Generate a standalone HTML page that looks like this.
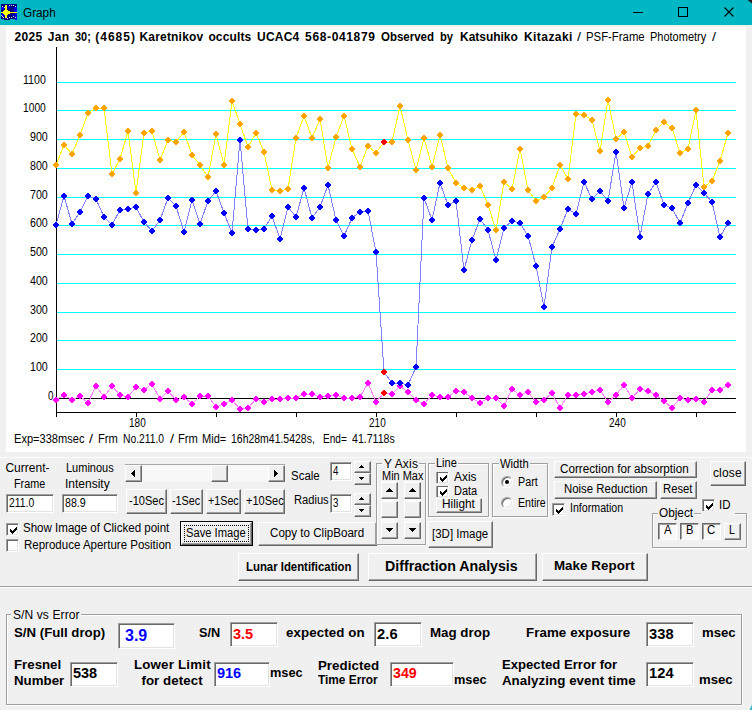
<!DOCTYPE html><html><head><meta charset="utf-8"><title>Graph</title><style>
html,body{margin:0;padding:0}
body{width:752px;height:710px;background:#f0f0f0;overflow:hidden;position:relative;font-family:"Liberation Sans",sans-serif;font-size:12px;color:#000}
.abs{position:absolute}
.btn{position:absolute;box-sizing:border-box;background:#f0f0f0;border:1px solid;border-color:#fff #696969 #696969 #fff;box-shadow:inset -1px -1px 0 #a0a0a0,inset 1px 1px 0 #f0f0f0}
.pbtn{position:absolute;box-sizing:border-box;background:#f8f8f8;border:1px solid;border-color:#696969 #fff #fff #696969;box-shadow:inset 1px 1px 0 #a0a0a0}
.tb{position:absolute;box-sizing:border-box;background:#fff;border:1px solid;border-color:#a0a0a0 #fff #fff #a0a0a0;box-shadow:inset 1px 1px 0 #696969,inset -1px -1px 0 #e3e3e3}
.grp{position:absolute;box-sizing:border-box;border:1px solid #a0a0a0;box-shadow:1px 1px 0 #fff,inset 1px 1px 0 #fff}
.gap{position:absolute;background:#f0f0f0}
.cb{position:absolute;box-sizing:border-box;width:13px;height:13px;background:#fff;border:1px solid;border-color:#a0a0a0 #fff #fff #a0a0a0;box-shadow:inset 1px 1px 0 #696969,inset -1px -1px 0 #e3e3e3}
.rb{position:absolute;box-sizing:border-box;width:12px;height:12px;border-radius:6px;background:#fff;border:1px solid;border-color:#a0a0a0 #fff #fff #a0a0a0;box-shadow:inset 1px 1px 0 #696969,inset -1px -1px 0 #e3e3e3}
.sbtrack{position:absolute;background:#f8f8f8}
.t{position:absolute;white-space:pre;line-height:1;transform-origin:0 0;display:block}
</style></head><body>
<svg class="abs" style="left:0;top:0" width="752" height="460" viewBox="0 0 752 460" shape-rendering="crispEdges"><rect x="6" y="27" width="740" height="425" fill="#fff"/><rect x="57" y="82" width="679" height="1" fill="#00ffff"/><rect x="57" y="110" width="679" height="1" fill="#00ffff"/><rect x="57" y="139" width="679" height="1" fill="#00ffff"/><rect x="57" y="168" width="679" height="1" fill="#00ffff"/><rect x="57" y="197" width="679" height="1" fill="#00ffff"/><rect x="57" y="225" width="679" height="1" fill="#00ffff"/><rect x="57" y="254" width="679" height="1" fill="#00ffff"/><rect x="57" y="283" width="679" height="1" fill="#00ffff"/><rect x="57" y="312" width="679" height="1" fill="#00ffff"/><rect x="57" y="340" width="679" height="1" fill="#00ffff"/><rect x="57" y="369" width="679" height="1" fill="#00ffff"/><rect x="56" y="47" width="1" height="370" fill="#000"/><rect x="56" y="398" width="680" height="1" fill="#000"/><rect x="56" y="412" width="680" height="1" fill="#000"/><rect x="136" y="412" width="1" height="5" fill="#000"/><rect x="216" y="412" width="1" height="5" fill="#000"/><rect x="296" y="412" width="1" height="5" fill="#000"/><rect x="376" y="412" width="1" height="5" fill="#000"/><rect x="456" y="412" width="1" height="5" fill="#000"/><rect x="536" y="412" width="1" height="5" fill="#000"/><rect x="616" y="412" width="1" height="5" fill="#000"/><rect x="696" y="412" width="1" height="5" fill="#000"/><g shape-rendering="crispEdges"><polyline points="56,400 64,395 72,400 80,396 88,403 96,386 104,397 112,386 120,395 128,397 136,387 144,390 152,384 160,399 168,391 176,400 184,397 192,404 200,396 208,396 216,407 224,404 232,400 240,409 248,408 256,399 264,402 272,399 280,399 288,398 296,398 304,394 312,394 320,397 328,396 336,395 344,398 352,398 360,397 368,383 376,402 384,393 392,394 400,386 408,392 416,400 424,404 432,395 440,397 448,397 456,391 464,392 472,398 480,403 488,398 496,398 504,406 512,389 520,395 528,392 536,402 544,400 552,393 560,408 568,395 576,395 584,394 592,392 600,390 608,402 616,395 624,385 632,398 640,389 648,391 656,395 664,401 672,408 680,398 688,400 696,399 704,402 712,390 720,390 728,385" fill="none" stroke="#ff80ff" stroke-width="1"/><polyline points="56,165 64,145 72,154 80,135 88,113 96,108 104,108 112,174 120,159 128,131 136,193 144,133 152,131 160,160 168,140 176,142 184,132 192,155 200,165 208,177 216,134 224,165 232,101 240,124 248,147 256,133 264,152 272,190 280,191 288,189 296,138 304,116 312,138 320,119 328,168 336,137 344,116 352,149 360,167 368,146 376,153 384,142 392,142 400,106 408,140 416,170 424,138 432,167 440,135 448,168 456,183 464,188 472,190 480,186 488,205 496,230 504,182 512,189 520,149 528,190 536,201 544,197 552,188 560,165 568,179 576,114 584,115 592,120 600,151 608,100 616,139 624,132 632,157 640,148 648,146 656,130 664,122 672,128 680,153 688,149 696,110 704,187 712,181 720,161 728,133" fill="none" stroke="#ffff00" stroke-width="1"/><polyline points="56,225 64,196 72,224 80,212 88,196 96,199 104,217 112,225 120,210 128,209 136,207 144,222 152,231 160,220 168,198 176,206 184,232 192,200 200,224 208,201 216,191 224,213 232,233 240,140 248,229 256,230 264,229 272,216 280,239 288,207 296,217 304,188 312,218 320,207 328,185 336,220 344,236 352,218 360,212 368,211 376,252 384,372 392,383 400,383 408,385 416,367 424,198 432,220 440,183 448,205 456,201 464,270 472,240 480,219 488,230 496,260 504,228 512,221 520,223 528,236 536,266 544,307 552,247 560,229 568,209 576,214 584,182 592,199 600,191 608,201 616,152 624,208 632,182 640,237 648,194 656,182 664,205 672,208 680,223 688,203 696,185 704,193 712,202 720,237 728,223" fill="none" stroke="#8080ff" stroke-width="1"/><path d="M55 397h2v1h1v1h1v2h-1v1h-1v1h-2v-1h-1v-1h-1v-2h1v-1h1z" fill="#ff00ff"/><path d="M63 392h2v1h1v1h1v2h-1v1h-1v1h-2v-1h-1v-1h-1v-2h1v-1h1z" fill="#ff00ff"/><path d="M71 397h2v1h1v1h1v2h-1v1h-1v1h-2v-1h-1v-1h-1v-2h1v-1h1z" fill="#ff00ff"/><path d="M79 393h2v1h1v1h1v2h-1v1h-1v1h-2v-1h-1v-1h-1v-2h1v-1h1z" fill="#ff00ff"/><path d="M87 400h2v1h1v1h1v2h-1v1h-1v1h-2v-1h-1v-1h-1v-2h1v-1h1z" fill="#ff00ff"/><path d="M95 383h2v1h1v1h1v2h-1v1h-1v1h-2v-1h-1v-1h-1v-2h1v-1h1z" fill="#ff00ff"/><path d="M103 394h2v1h1v1h1v2h-1v1h-1v1h-2v-1h-1v-1h-1v-2h1v-1h1z" fill="#ff00ff"/><path d="M111 383h2v1h1v1h1v2h-1v1h-1v1h-2v-1h-1v-1h-1v-2h1v-1h1z" fill="#ff00ff"/><path d="M119 392h2v1h1v1h1v2h-1v1h-1v1h-2v-1h-1v-1h-1v-2h1v-1h1z" fill="#ff00ff"/><path d="M127 394h2v1h1v1h1v2h-1v1h-1v1h-2v-1h-1v-1h-1v-2h1v-1h1z" fill="#ff00ff"/><path d="M135 384h2v1h1v1h1v2h-1v1h-1v1h-2v-1h-1v-1h-1v-2h1v-1h1z" fill="#ff00ff"/><path d="M143 387h2v1h1v1h1v2h-1v1h-1v1h-2v-1h-1v-1h-1v-2h1v-1h1z" fill="#ff00ff"/><path d="M151 381h2v1h1v1h1v2h-1v1h-1v1h-2v-1h-1v-1h-1v-2h1v-1h1z" fill="#ff00ff"/><path d="M159 396h2v1h1v1h1v2h-1v1h-1v1h-2v-1h-1v-1h-1v-2h1v-1h1z" fill="#ff00ff"/><path d="M167 388h2v1h1v1h1v2h-1v1h-1v1h-2v-1h-1v-1h-1v-2h1v-1h1z" fill="#ff00ff"/><path d="M175 397h2v1h1v1h1v2h-1v1h-1v1h-2v-1h-1v-1h-1v-2h1v-1h1z" fill="#ff00ff"/><path d="M183 394h2v1h1v1h1v2h-1v1h-1v1h-2v-1h-1v-1h-1v-2h1v-1h1z" fill="#ff00ff"/><path d="M191 401h2v1h1v1h1v2h-1v1h-1v1h-2v-1h-1v-1h-1v-2h1v-1h1z" fill="#ff00ff"/><path d="M199 393h2v1h1v1h1v2h-1v1h-1v1h-2v-1h-1v-1h-1v-2h1v-1h1z" fill="#ff00ff"/><path d="M207 393h2v1h1v1h1v2h-1v1h-1v1h-2v-1h-1v-1h-1v-2h1v-1h1z" fill="#ff00ff"/><path d="M215 404h2v1h1v1h1v2h-1v1h-1v1h-2v-1h-1v-1h-1v-2h1v-1h1z" fill="#ff00ff"/><path d="M223 401h2v1h1v1h1v2h-1v1h-1v1h-2v-1h-1v-1h-1v-2h1v-1h1z" fill="#ff00ff"/><path d="M231 397h2v1h1v1h1v2h-1v1h-1v1h-2v-1h-1v-1h-1v-2h1v-1h1z" fill="#ff00ff"/><path d="M239 406h2v1h1v1h1v2h-1v1h-1v1h-2v-1h-1v-1h-1v-2h1v-1h1z" fill="#ff00ff"/><path d="M247 405h2v1h1v1h1v2h-1v1h-1v1h-2v-1h-1v-1h-1v-2h1v-1h1z" fill="#ff00ff"/><path d="M255 396h2v1h1v1h1v2h-1v1h-1v1h-2v-1h-1v-1h-1v-2h1v-1h1z" fill="#ff00ff"/><path d="M263 399h2v1h1v1h1v2h-1v1h-1v1h-2v-1h-1v-1h-1v-2h1v-1h1z" fill="#ff00ff"/><path d="M271 396h2v1h1v1h1v2h-1v1h-1v1h-2v-1h-1v-1h-1v-2h1v-1h1z" fill="#ff00ff"/><path d="M279 396h2v1h1v1h1v2h-1v1h-1v1h-2v-1h-1v-1h-1v-2h1v-1h1z" fill="#ff00ff"/><path d="M287 395h2v1h1v1h1v2h-1v1h-1v1h-2v-1h-1v-1h-1v-2h1v-1h1z" fill="#ff00ff"/><path d="M295 395h2v1h1v1h1v2h-1v1h-1v1h-2v-1h-1v-1h-1v-2h1v-1h1z" fill="#ff00ff"/><path d="M303 391h2v1h1v1h1v2h-1v1h-1v1h-2v-1h-1v-1h-1v-2h1v-1h1z" fill="#ff00ff"/><path d="M311 391h2v1h1v1h1v2h-1v1h-1v1h-2v-1h-1v-1h-1v-2h1v-1h1z" fill="#ff00ff"/><path d="M319 394h2v1h1v1h1v2h-1v1h-1v1h-2v-1h-1v-1h-1v-2h1v-1h1z" fill="#ff00ff"/><path d="M327 393h2v1h1v1h1v2h-1v1h-1v1h-2v-1h-1v-1h-1v-2h1v-1h1z" fill="#ff00ff"/><path d="M335 392h2v1h1v1h1v2h-1v1h-1v1h-2v-1h-1v-1h-1v-2h1v-1h1z" fill="#ff00ff"/><path d="M343 395h2v1h1v1h1v2h-1v1h-1v1h-2v-1h-1v-1h-1v-2h1v-1h1z" fill="#ff00ff"/><path d="M351 395h2v1h1v1h1v2h-1v1h-1v1h-2v-1h-1v-1h-1v-2h1v-1h1z" fill="#ff00ff"/><path d="M359 394h2v1h1v1h1v2h-1v1h-1v1h-2v-1h-1v-1h-1v-2h1v-1h1z" fill="#ff00ff"/><path d="M367 380h2v1h1v1h1v2h-1v1h-1v1h-2v-1h-1v-1h-1v-2h1v-1h1z" fill="#ff00ff"/><path d="M375 399h2v1h1v1h1v2h-1v1h-1v1h-2v-1h-1v-1h-1v-2h1v-1h1z" fill="#ff00ff"/><path d="M383 390h2v1h1v1h1v2h-1v1h-1v1h-2v-1h-1v-1h-1v-2h1v-1h1z" fill="#ff0000"/><path d="M391 391h2v1h1v1h1v2h-1v1h-1v1h-2v-1h-1v-1h-1v-2h1v-1h1z" fill="#ff00ff"/><path d="M399 383h2v1h1v1h1v2h-1v1h-1v1h-2v-1h-1v-1h-1v-2h1v-1h1z" fill="#ff00ff"/><path d="M407 389h2v1h1v1h1v2h-1v1h-1v1h-2v-1h-1v-1h-1v-2h1v-1h1z" fill="#ff00ff"/><path d="M415 397h2v1h1v1h1v2h-1v1h-1v1h-2v-1h-1v-1h-1v-2h1v-1h1z" fill="#ff00ff"/><path d="M423 401h2v1h1v1h1v2h-1v1h-1v1h-2v-1h-1v-1h-1v-2h1v-1h1z" fill="#ff00ff"/><path d="M431 392h2v1h1v1h1v2h-1v1h-1v1h-2v-1h-1v-1h-1v-2h1v-1h1z" fill="#ff00ff"/><path d="M439 394h2v1h1v1h1v2h-1v1h-1v1h-2v-1h-1v-1h-1v-2h1v-1h1z" fill="#ff00ff"/><path d="M447 394h2v1h1v1h1v2h-1v1h-1v1h-2v-1h-1v-1h-1v-2h1v-1h1z" fill="#ff00ff"/><path d="M455 388h2v1h1v1h1v2h-1v1h-1v1h-2v-1h-1v-1h-1v-2h1v-1h1z" fill="#ff00ff"/><path d="M463 389h2v1h1v1h1v2h-1v1h-1v1h-2v-1h-1v-1h-1v-2h1v-1h1z" fill="#ff00ff"/><path d="M471 395h2v1h1v1h1v2h-1v1h-1v1h-2v-1h-1v-1h-1v-2h1v-1h1z" fill="#ff00ff"/><path d="M479 400h2v1h1v1h1v2h-1v1h-1v1h-2v-1h-1v-1h-1v-2h1v-1h1z" fill="#ff00ff"/><path d="M487 395h2v1h1v1h1v2h-1v1h-1v1h-2v-1h-1v-1h-1v-2h1v-1h1z" fill="#ff00ff"/><path d="M495 395h2v1h1v1h1v2h-1v1h-1v1h-2v-1h-1v-1h-1v-2h1v-1h1z" fill="#ff00ff"/><path d="M503 403h2v1h1v1h1v2h-1v1h-1v1h-2v-1h-1v-1h-1v-2h1v-1h1z" fill="#ff00ff"/><path d="M511 386h2v1h1v1h1v2h-1v1h-1v1h-2v-1h-1v-1h-1v-2h1v-1h1z" fill="#ff00ff"/><path d="M519 392h2v1h1v1h1v2h-1v1h-1v1h-2v-1h-1v-1h-1v-2h1v-1h1z" fill="#ff00ff"/><path d="M527 389h2v1h1v1h1v2h-1v1h-1v1h-2v-1h-1v-1h-1v-2h1v-1h1z" fill="#ff00ff"/><path d="M535 399h2v1h1v1h1v2h-1v1h-1v1h-2v-1h-1v-1h-1v-2h1v-1h1z" fill="#ff00ff"/><path d="M543 397h2v1h1v1h1v2h-1v1h-1v1h-2v-1h-1v-1h-1v-2h1v-1h1z" fill="#ff00ff"/><path d="M551 390h2v1h1v1h1v2h-1v1h-1v1h-2v-1h-1v-1h-1v-2h1v-1h1z" fill="#ff00ff"/><path d="M559 405h2v1h1v1h1v2h-1v1h-1v1h-2v-1h-1v-1h-1v-2h1v-1h1z" fill="#ff00ff"/><path d="M567 392h2v1h1v1h1v2h-1v1h-1v1h-2v-1h-1v-1h-1v-2h1v-1h1z" fill="#ff00ff"/><path d="M575 392h2v1h1v1h1v2h-1v1h-1v1h-2v-1h-1v-1h-1v-2h1v-1h1z" fill="#ff00ff"/><path d="M583 391h2v1h1v1h1v2h-1v1h-1v1h-2v-1h-1v-1h-1v-2h1v-1h1z" fill="#ff00ff"/><path d="M591 389h2v1h1v1h1v2h-1v1h-1v1h-2v-1h-1v-1h-1v-2h1v-1h1z" fill="#ff00ff"/><path d="M599 387h2v1h1v1h1v2h-1v1h-1v1h-2v-1h-1v-1h-1v-2h1v-1h1z" fill="#ff00ff"/><path d="M607 399h2v1h1v1h1v2h-1v1h-1v1h-2v-1h-1v-1h-1v-2h1v-1h1z" fill="#ff00ff"/><path d="M615 392h2v1h1v1h1v2h-1v1h-1v1h-2v-1h-1v-1h-1v-2h1v-1h1z" fill="#ff00ff"/><path d="M623 382h2v1h1v1h1v2h-1v1h-1v1h-2v-1h-1v-1h-1v-2h1v-1h1z" fill="#ff00ff"/><path d="M631 395h2v1h1v1h1v2h-1v1h-1v1h-2v-1h-1v-1h-1v-2h1v-1h1z" fill="#ff00ff"/><path d="M639 386h2v1h1v1h1v2h-1v1h-1v1h-2v-1h-1v-1h-1v-2h1v-1h1z" fill="#ff00ff"/><path d="M647 388h2v1h1v1h1v2h-1v1h-1v1h-2v-1h-1v-1h-1v-2h1v-1h1z" fill="#ff00ff"/><path d="M655 392h2v1h1v1h1v2h-1v1h-1v1h-2v-1h-1v-1h-1v-2h1v-1h1z" fill="#ff00ff"/><path d="M663 398h2v1h1v1h1v2h-1v1h-1v1h-2v-1h-1v-1h-1v-2h1v-1h1z" fill="#ff00ff"/><path d="M671 405h2v1h1v1h1v2h-1v1h-1v1h-2v-1h-1v-1h-1v-2h1v-1h1z" fill="#ff00ff"/><path d="M679 395h2v1h1v1h1v2h-1v1h-1v1h-2v-1h-1v-1h-1v-2h1v-1h1z" fill="#ff00ff"/><path d="M687 397h2v1h1v1h1v2h-1v1h-1v1h-2v-1h-1v-1h-1v-2h1v-1h1z" fill="#ff00ff"/><path d="M695 396h2v1h1v1h1v2h-1v1h-1v1h-2v-1h-1v-1h-1v-2h1v-1h1z" fill="#ff00ff"/><path d="M703 399h2v1h1v1h1v2h-1v1h-1v1h-2v-1h-1v-1h-1v-2h1v-1h1z" fill="#ff00ff"/><path d="M711 387h2v1h1v1h1v2h-1v1h-1v1h-2v-1h-1v-1h-1v-2h1v-1h1z" fill="#ff00ff"/><path d="M719 387h2v1h1v1h1v2h-1v1h-1v1h-2v-1h-1v-1h-1v-2h1v-1h1z" fill="#ff00ff"/><path d="M727 382h2v1h1v1h1v2h-1v1h-1v1h-2v-1h-1v-1h-1v-2h1v-1h1z" fill="#ff00ff"/><path d="M55 162h2v1h1v1h1v2h-1v1h-1v1h-2v-1h-1v-1h-1v-2h1v-1h1z" fill="#ffa500"/><path d="M63 142h2v1h1v1h1v2h-1v1h-1v1h-2v-1h-1v-1h-1v-2h1v-1h1z" fill="#ffa500"/><path d="M71 151h2v1h1v1h1v2h-1v1h-1v1h-2v-1h-1v-1h-1v-2h1v-1h1z" fill="#ffa500"/><path d="M79 132h2v1h1v1h1v2h-1v1h-1v1h-2v-1h-1v-1h-1v-2h1v-1h1z" fill="#ffa500"/><path d="M87 110h2v1h1v1h1v2h-1v1h-1v1h-2v-1h-1v-1h-1v-2h1v-1h1z" fill="#ffa500"/><path d="M95 105h2v1h1v1h1v2h-1v1h-1v1h-2v-1h-1v-1h-1v-2h1v-1h1z" fill="#ffa500"/><path d="M103 105h2v1h1v1h1v2h-1v1h-1v1h-2v-1h-1v-1h-1v-2h1v-1h1z" fill="#ffa500"/><path d="M111 171h2v1h1v1h1v2h-1v1h-1v1h-2v-1h-1v-1h-1v-2h1v-1h1z" fill="#ffa500"/><path d="M119 156h2v1h1v1h1v2h-1v1h-1v1h-2v-1h-1v-1h-1v-2h1v-1h1z" fill="#ffa500"/><path d="M127 128h2v1h1v1h1v2h-1v1h-1v1h-2v-1h-1v-1h-1v-2h1v-1h1z" fill="#ffa500"/><path d="M135 190h2v1h1v1h1v2h-1v1h-1v1h-2v-1h-1v-1h-1v-2h1v-1h1z" fill="#ffa500"/><path d="M143 130h2v1h1v1h1v2h-1v1h-1v1h-2v-1h-1v-1h-1v-2h1v-1h1z" fill="#ffa500"/><path d="M151 128h2v1h1v1h1v2h-1v1h-1v1h-2v-1h-1v-1h-1v-2h1v-1h1z" fill="#ffa500"/><path d="M159 157h2v1h1v1h1v2h-1v1h-1v1h-2v-1h-1v-1h-1v-2h1v-1h1z" fill="#ffa500"/><path d="M167 137h2v1h1v1h1v2h-1v1h-1v1h-2v-1h-1v-1h-1v-2h1v-1h1z" fill="#ffa500"/><path d="M175 139h2v1h1v1h1v2h-1v1h-1v1h-2v-1h-1v-1h-1v-2h1v-1h1z" fill="#ffa500"/><path d="M183 129h2v1h1v1h1v2h-1v1h-1v1h-2v-1h-1v-1h-1v-2h1v-1h1z" fill="#ffa500"/><path d="M191 152h2v1h1v1h1v2h-1v1h-1v1h-2v-1h-1v-1h-1v-2h1v-1h1z" fill="#ffa500"/><path d="M199 162h2v1h1v1h1v2h-1v1h-1v1h-2v-1h-1v-1h-1v-2h1v-1h1z" fill="#ffa500"/><path d="M207 174h2v1h1v1h1v2h-1v1h-1v1h-2v-1h-1v-1h-1v-2h1v-1h1z" fill="#ffa500"/><path d="M215 131h2v1h1v1h1v2h-1v1h-1v1h-2v-1h-1v-1h-1v-2h1v-1h1z" fill="#ffa500"/><path d="M223 162h2v1h1v1h1v2h-1v1h-1v1h-2v-1h-1v-1h-1v-2h1v-1h1z" fill="#ffa500"/><path d="M231 98h2v1h1v1h1v2h-1v1h-1v1h-2v-1h-1v-1h-1v-2h1v-1h1z" fill="#ffa500"/><path d="M239 121h2v1h1v1h1v2h-1v1h-1v1h-2v-1h-1v-1h-1v-2h1v-1h1z" fill="#ffa500"/><path d="M247 144h2v1h1v1h1v2h-1v1h-1v1h-2v-1h-1v-1h-1v-2h1v-1h1z" fill="#ffa500"/><path d="M255 130h2v1h1v1h1v2h-1v1h-1v1h-2v-1h-1v-1h-1v-2h1v-1h1z" fill="#ffa500"/><path d="M263 149h2v1h1v1h1v2h-1v1h-1v1h-2v-1h-1v-1h-1v-2h1v-1h1z" fill="#ffa500"/><path d="M271 187h2v1h1v1h1v2h-1v1h-1v1h-2v-1h-1v-1h-1v-2h1v-1h1z" fill="#ffa500"/><path d="M279 188h2v1h1v1h1v2h-1v1h-1v1h-2v-1h-1v-1h-1v-2h1v-1h1z" fill="#ffa500"/><path d="M287 186h2v1h1v1h1v2h-1v1h-1v1h-2v-1h-1v-1h-1v-2h1v-1h1z" fill="#ffa500"/><path d="M295 135h2v1h1v1h1v2h-1v1h-1v1h-2v-1h-1v-1h-1v-2h1v-1h1z" fill="#ffa500"/><path d="M303 113h2v1h1v1h1v2h-1v1h-1v1h-2v-1h-1v-1h-1v-2h1v-1h1z" fill="#ffa500"/><path d="M311 135h2v1h1v1h1v2h-1v1h-1v1h-2v-1h-1v-1h-1v-2h1v-1h1z" fill="#ffa500"/><path d="M319 116h2v1h1v1h1v2h-1v1h-1v1h-2v-1h-1v-1h-1v-2h1v-1h1z" fill="#ffa500"/><path d="M327 165h2v1h1v1h1v2h-1v1h-1v1h-2v-1h-1v-1h-1v-2h1v-1h1z" fill="#ffa500"/><path d="M335 134h2v1h1v1h1v2h-1v1h-1v1h-2v-1h-1v-1h-1v-2h1v-1h1z" fill="#ffa500"/><path d="M343 113h2v1h1v1h1v2h-1v1h-1v1h-2v-1h-1v-1h-1v-2h1v-1h1z" fill="#ffa500"/><path d="M351 146h2v1h1v1h1v2h-1v1h-1v1h-2v-1h-1v-1h-1v-2h1v-1h1z" fill="#ffa500"/><path d="M359 164h2v1h1v1h1v2h-1v1h-1v1h-2v-1h-1v-1h-1v-2h1v-1h1z" fill="#ffa500"/><path d="M367 143h2v1h1v1h1v2h-1v1h-1v1h-2v-1h-1v-1h-1v-2h1v-1h1z" fill="#ffa500"/><path d="M375 150h2v1h1v1h1v2h-1v1h-1v1h-2v-1h-1v-1h-1v-2h1v-1h1z" fill="#ffa500"/><path d="M383 139h2v1h1v1h1v2h-1v1h-1v1h-2v-1h-1v-1h-1v-2h1v-1h1z" fill="#ff0000"/><path d="M391 139h2v1h1v1h1v2h-1v1h-1v1h-2v-1h-1v-1h-1v-2h1v-1h1z" fill="#ffa500"/><path d="M399 103h2v1h1v1h1v2h-1v1h-1v1h-2v-1h-1v-1h-1v-2h1v-1h1z" fill="#ffa500"/><path d="M407 137h2v1h1v1h1v2h-1v1h-1v1h-2v-1h-1v-1h-1v-2h1v-1h1z" fill="#ffa500"/><path d="M415 167h2v1h1v1h1v2h-1v1h-1v1h-2v-1h-1v-1h-1v-2h1v-1h1z" fill="#ffa500"/><path d="M423 135h2v1h1v1h1v2h-1v1h-1v1h-2v-1h-1v-1h-1v-2h1v-1h1z" fill="#ffa500"/><path d="M431 164h2v1h1v1h1v2h-1v1h-1v1h-2v-1h-1v-1h-1v-2h1v-1h1z" fill="#ffa500"/><path d="M439 132h2v1h1v1h1v2h-1v1h-1v1h-2v-1h-1v-1h-1v-2h1v-1h1z" fill="#ffa500"/><path d="M447 165h2v1h1v1h1v2h-1v1h-1v1h-2v-1h-1v-1h-1v-2h1v-1h1z" fill="#ffa500"/><path d="M455 180h2v1h1v1h1v2h-1v1h-1v1h-2v-1h-1v-1h-1v-2h1v-1h1z" fill="#ffa500"/><path d="M463 185h2v1h1v1h1v2h-1v1h-1v1h-2v-1h-1v-1h-1v-2h1v-1h1z" fill="#ffa500"/><path d="M471 187h2v1h1v1h1v2h-1v1h-1v1h-2v-1h-1v-1h-1v-2h1v-1h1z" fill="#ffa500"/><path d="M479 183h2v1h1v1h1v2h-1v1h-1v1h-2v-1h-1v-1h-1v-2h1v-1h1z" fill="#ffa500"/><path d="M487 202h2v1h1v1h1v2h-1v1h-1v1h-2v-1h-1v-1h-1v-2h1v-1h1z" fill="#ffa500"/><path d="M495 227h2v1h1v1h1v2h-1v1h-1v1h-2v-1h-1v-1h-1v-2h1v-1h1z" fill="#ffa500"/><path d="M503 179h2v1h1v1h1v2h-1v1h-1v1h-2v-1h-1v-1h-1v-2h1v-1h1z" fill="#ffa500"/><path d="M511 186h2v1h1v1h1v2h-1v1h-1v1h-2v-1h-1v-1h-1v-2h1v-1h1z" fill="#ffa500"/><path d="M519 146h2v1h1v1h1v2h-1v1h-1v1h-2v-1h-1v-1h-1v-2h1v-1h1z" fill="#ffa500"/><path d="M527 187h2v1h1v1h1v2h-1v1h-1v1h-2v-1h-1v-1h-1v-2h1v-1h1z" fill="#ffa500"/><path d="M535 198h2v1h1v1h1v2h-1v1h-1v1h-2v-1h-1v-1h-1v-2h1v-1h1z" fill="#ffa500"/><path d="M543 194h2v1h1v1h1v2h-1v1h-1v1h-2v-1h-1v-1h-1v-2h1v-1h1z" fill="#ffa500"/><path d="M551 185h2v1h1v1h1v2h-1v1h-1v1h-2v-1h-1v-1h-1v-2h1v-1h1z" fill="#ffa500"/><path d="M559 162h2v1h1v1h1v2h-1v1h-1v1h-2v-1h-1v-1h-1v-2h1v-1h1z" fill="#ffa500"/><path d="M567 176h2v1h1v1h1v2h-1v1h-1v1h-2v-1h-1v-1h-1v-2h1v-1h1z" fill="#ffa500"/><path d="M575 111h2v1h1v1h1v2h-1v1h-1v1h-2v-1h-1v-1h-1v-2h1v-1h1z" fill="#ffa500"/><path d="M583 112h2v1h1v1h1v2h-1v1h-1v1h-2v-1h-1v-1h-1v-2h1v-1h1z" fill="#ffa500"/><path d="M591 117h2v1h1v1h1v2h-1v1h-1v1h-2v-1h-1v-1h-1v-2h1v-1h1z" fill="#ffa500"/><path d="M599 148h2v1h1v1h1v2h-1v1h-1v1h-2v-1h-1v-1h-1v-2h1v-1h1z" fill="#ffa500"/><path d="M607 97h2v1h1v1h1v2h-1v1h-1v1h-2v-1h-1v-1h-1v-2h1v-1h1z" fill="#ffa500"/><path d="M615 136h2v1h1v1h1v2h-1v1h-1v1h-2v-1h-1v-1h-1v-2h1v-1h1z" fill="#ffa500"/><path d="M623 129h2v1h1v1h1v2h-1v1h-1v1h-2v-1h-1v-1h-1v-2h1v-1h1z" fill="#ffa500"/><path d="M631 154h2v1h1v1h1v2h-1v1h-1v1h-2v-1h-1v-1h-1v-2h1v-1h1z" fill="#ffa500"/><path d="M639 145h2v1h1v1h1v2h-1v1h-1v1h-2v-1h-1v-1h-1v-2h1v-1h1z" fill="#ffa500"/><path d="M647 143h2v1h1v1h1v2h-1v1h-1v1h-2v-1h-1v-1h-1v-2h1v-1h1z" fill="#ffa500"/><path d="M655 127h2v1h1v1h1v2h-1v1h-1v1h-2v-1h-1v-1h-1v-2h1v-1h1z" fill="#ffa500"/><path d="M663 119h2v1h1v1h1v2h-1v1h-1v1h-2v-1h-1v-1h-1v-2h1v-1h1z" fill="#ffa500"/><path d="M671 125h2v1h1v1h1v2h-1v1h-1v1h-2v-1h-1v-1h-1v-2h1v-1h1z" fill="#ffa500"/><path d="M679 150h2v1h1v1h1v2h-1v1h-1v1h-2v-1h-1v-1h-1v-2h1v-1h1z" fill="#ffa500"/><path d="M687 146h2v1h1v1h1v2h-1v1h-1v1h-2v-1h-1v-1h-1v-2h1v-1h1z" fill="#ffa500"/><path d="M695 107h2v1h1v1h1v2h-1v1h-1v1h-2v-1h-1v-1h-1v-2h1v-1h1z" fill="#ffa500"/><path d="M703 184h2v1h1v1h1v2h-1v1h-1v1h-2v-1h-1v-1h-1v-2h1v-1h1z" fill="#ffa500"/><path d="M711 178h2v1h1v1h1v2h-1v1h-1v1h-2v-1h-1v-1h-1v-2h1v-1h1z" fill="#ffa500"/><path d="M719 158h2v1h1v1h1v2h-1v1h-1v1h-2v-1h-1v-1h-1v-2h1v-1h1z" fill="#ffa500"/><path d="M727 130h2v1h1v1h1v2h-1v1h-1v1h-2v-1h-1v-1h-1v-2h1v-1h1z" fill="#ffa500"/><path d="M55 222h2v1h1v1h1v2h-1v1h-1v1h-2v-1h-1v-1h-1v-2h1v-1h1z" fill="#0000ff"/><path d="M63 193h2v1h1v1h1v2h-1v1h-1v1h-2v-1h-1v-1h-1v-2h1v-1h1z" fill="#0000ff"/><path d="M71 221h2v1h1v1h1v2h-1v1h-1v1h-2v-1h-1v-1h-1v-2h1v-1h1z" fill="#0000ff"/><path d="M79 209h2v1h1v1h1v2h-1v1h-1v1h-2v-1h-1v-1h-1v-2h1v-1h1z" fill="#0000ff"/><path d="M87 193h2v1h1v1h1v2h-1v1h-1v1h-2v-1h-1v-1h-1v-2h1v-1h1z" fill="#0000ff"/><path d="M95 196h2v1h1v1h1v2h-1v1h-1v1h-2v-1h-1v-1h-1v-2h1v-1h1z" fill="#0000ff"/><path d="M103 214h2v1h1v1h1v2h-1v1h-1v1h-2v-1h-1v-1h-1v-2h1v-1h1z" fill="#0000ff"/><path d="M111 222h2v1h1v1h1v2h-1v1h-1v1h-2v-1h-1v-1h-1v-2h1v-1h1z" fill="#0000ff"/><path d="M119 207h2v1h1v1h1v2h-1v1h-1v1h-2v-1h-1v-1h-1v-2h1v-1h1z" fill="#0000ff"/><path d="M127 206h2v1h1v1h1v2h-1v1h-1v1h-2v-1h-1v-1h-1v-2h1v-1h1z" fill="#0000ff"/><path d="M135 204h2v1h1v1h1v2h-1v1h-1v1h-2v-1h-1v-1h-1v-2h1v-1h1z" fill="#0000ff"/><path d="M143 219h2v1h1v1h1v2h-1v1h-1v1h-2v-1h-1v-1h-1v-2h1v-1h1z" fill="#0000ff"/><path d="M151 228h2v1h1v1h1v2h-1v1h-1v1h-2v-1h-1v-1h-1v-2h1v-1h1z" fill="#0000ff"/><path d="M159 217h2v1h1v1h1v2h-1v1h-1v1h-2v-1h-1v-1h-1v-2h1v-1h1z" fill="#0000ff"/><path d="M167 195h2v1h1v1h1v2h-1v1h-1v1h-2v-1h-1v-1h-1v-2h1v-1h1z" fill="#0000ff"/><path d="M175 203h2v1h1v1h1v2h-1v1h-1v1h-2v-1h-1v-1h-1v-2h1v-1h1z" fill="#0000ff"/><path d="M183 229h2v1h1v1h1v2h-1v1h-1v1h-2v-1h-1v-1h-1v-2h1v-1h1z" fill="#0000ff"/><path d="M191 197h2v1h1v1h1v2h-1v1h-1v1h-2v-1h-1v-1h-1v-2h1v-1h1z" fill="#0000ff"/><path d="M199 221h2v1h1v1h1v2h-1v1h-1v1h-2v-1h-1v-1h-1v-2h1v-1h1z" fill="#0000ff"/><path d="M207 198h2v1h1v1h1v2h-1v1h-1v1h-2v-1h-1v-1h-1v-2h1v-1h1z" fill="#0000ff"/><path d="M215 188h2v1h1v1h1v2h-1v1h-1v1h-2v-1h-1v-1h-1v-2h1v-1h1z" fill="#0000ff"/><path d="M223 210h2v1h1v1h1v2h-1v1h-1v1h-2v-1h-1v-1h-1v-2h1v-1h1z" fill="#0000ff"/><path d="M231 230h2v1h1v1h1v2h-1v1h-1v1h-2v-1h-1v-1h-1v-2h1v-1h1z" fill="#0000ff"/><path d="M239 137h2v1h1v1h1v2h-1v1h-1v1h-2v-1h-1v-1h-1v-2h1v-1h1z" fill="#0000ff"/><path d="M247 226h2v1h1v1h1v2h-1v1h-1v1h-2v-1h-1v-1h-1v-2h1v-1h1z" fill="#0000ff"/><path d="M255 227h2v1h1v1h1v2h-1v1h-1v1h-2v-1h-1v-1h-1v-2h1v-1h1z" fill="#0000ff"/><path d="M263 226h2v1h1v1h1v2h-1v1h-1v1h-2v-1h-1v-1h-1v-2h1v-1h1z" fill="#0000ff"/><path d="M271 213h2v1h1v1h1v2h-1v1h-1v1h-2v-1h-1v-1h-1v-2h1v-1h1z" fill="#0000ff"/><path d="M279 236h2v1h1v1h1v2h-1v1h-1v1h-2v-1h-1v-1h-1v-2h1v-1h1z" fill="#0000ff"/><path d="M287 204h2v1h1v1h1v2h-1v1h-1v1h-2v-1h-1v-1h-1v-2h1v-1h1z" fill="#0000ff"/><path d="M295 214h2v1h1v1h1v2h-1v1h-1v1h-2v-1h-1v-1h-1v-2h1v-1h1z" fill="#0000ff"/><path d="M303 185h2v1h1v1h1v2h-1v1h-1v1h-2v-1h-1v-1h-1v-2h1v-1h1z" fill="#0000ff"/><path d="M311 215h2v1h1v1h1v2h-1v1h-1v1h-2v-1h-1v-1h-1v-2h1v-1h1z" fill="#0000ff"/><path d="M319 204h2v1h1v1h1v2h-1v1h-1v1h-2v-1h-1v-1h-1v-2h1v-1h1z" fill="#0000ff"/><path d="M327 182h2v1h1v1h1v2h-1v1h-1v1h-2v-1h-1v-1h-1v-2h1v-1h1z" fill="#0000ff"/><path d="M335 217h2v1h1v1h1v2h-1v1h-1v1h-2v-1h-1v-1h-1v-2h1v-1h1z" fill="#0000ff"/><path d="M343 233h2v1h1v1h1v2h-1v1h-1v1h-2v-1h-1v-1h-1v-2h1v-1h1z" fill="#0000ff"/><path d="M351 215h2v1h1v1h1v2h-1v1h-1v1h-2v-1h-1v-1h-1v-2h1v-1h1z" fill="#0000ff"/><path d="M359 209h2v1h1v1h1v2h-1v1h-1v1h-2v-1h-1v-1h-1v-2h1v-1h1z" fill="#0000ff"/><path d="M367 208h2v1h1v1h1v2h-1v1h-1v1h-2v-1h-1v-1h-1v-2h1v-1h1z" fill="#0000ff"/><path d="M375 249h2v1h1v1h1v2h-1v1h-1v1h-2v-1h-1v-1h-1v-2h1v-1h1z" fill="#0000ff"/><path d="M383 369h2v1h1v1h1v2h-1v1h-1v1h-2v-1h-1v-1h-1v-2h1v-1h1z" fill="#ff0000"/><path d="M391 380h2v1h1v1h1v2h-1v1h-1v1h-2v-1h-1v-1h-1v-2h1v-1h1z" fill="#0000ff"/><path d="M399 380h2v1h1v1h1v2h-1v1h-1v1h-2v-1h-1v-1h-1v-2h1v-1h1z" fill="#0000ff"/><path d="M407 382h2v1h1v1h1v2h-1v1h-1v1h-2v-1h-1v-1h-1v-2h1v-1h1z" fill="#0000ff"/><path d="M415 364h2v1h1v1h1v2h-1v1h-1v1h-2v-1h-1v-1h-1v-2h1v-1h1z" fill="#0000ff"/><path d="M423 195h2v1h1v1h1v2h-1v1h-1v1h-2v-1h-1v-1h-1v-2h1v-1h1z" fill="#0000ff"/><path d="M431 217h2v1h1v1h1v2h-1v1h-1v1h-2v-1h-1v-1h-1v-2h1v-1h1z" fill="#0000ff"/><path d="M439 180h2v1h1v1h1v2h-1v1h-1v1h-2v-1h-1v-1h-1v-2h1v-1h1z" fill="#0000ff"/><path d="M447 202h2v1h1v1h1v2h-1v1h-1v1h-2v-1h-1v-1h-1v-2h1v-1h1z" fill="#0000ff"/><path d="M455 198h2v1h1v1h1v2h-1v1h-1v1h-2v-1h-1v-1h-1v-2h1v-1h1z" fill="#0000ff"/><path d="M463 267h2v1h1v1h1v2h-1v1h-1v1h-2v-1h-1v-1h-1v-2h1v-1h1z" fill="#0000ff"/><path d="M471 237h2v1h1v1h1v2h-1v1h-1v1h-2v-1h-1v-1h-1v-2h1v-1h1z" fill="#0000ff"/><path d="M479 216h2v1h1v1h1v2h-1v1h-1v1h-2v-1h-1v-1h-1v-2h1v-1h1z" fill="#0000ff"/><path d="M487 227h2v1h1v1h1v2h-1v1h-1v1h-2v-1h-1v-1h-1v-2h1v-1h1z" fill="#0000ff"/><path d="M495 257h2v1h1v1h1v2h-1v1h-1v1h-2v-1h-1v-1h-1v-2h1v-1h1z" fill="#0000ff"/><path d="M503 225h2v1h1v1h1v2h-1v1h-1v1h-2v-1h-1v-1h-1v-2h1v-1h1z" fill="#0000ff"/><path d="M511 218h2v1h1v1h1v2h-1v1h-1v1h-2v-1h-1v-1h-1v-2h1v-1h1z" fill="#0000ff"/><path d="M519 220h2v1h1v1h1v2h-1v1h-1v1h-2v-1h-1v-1h-1v-2h1v-1h1z" fill="#0000ff"/><path d="M527 233h2v1h1v1h1v2h-1v1h-1v1h-2v-1h-1v-1h-1v-2h1v-1h1z" fill="#0000ff"/><path d="M535 263h2v1h1v1h1v2h-1v1h-1v1h-2v-1h-1v-1h-1v-2h1v-1h1z" fill="#0000ff"/><path d="M543 304h2v1h1v1h1v2h-1v1h-1v1h-2v-1h-1v-1h-1v-2h1v-1h1z" fill="#0000ff"/><path d="M551 244h2v1h1v1h1v2h-1v1h-1v1h-2v-1h-1v-1h-1v-2h1v-1h1z" fill="#0000ff"/><path d="M559 226h2v1h1v1h1v2h-1v1h-1v1h-2v-1h-1v-1h-1v-2h1v-1h1z" fill="#0000ff"/><path d="M567 206h2v1h1v1h1v2h-1v1h-1v1h-2v-1h-1v-1h-1v-2h1v-1h1z" fill="#0000ff"/><path d="M575 211h2v1h1v1h1v2h-1v1h-1v1h-2v-1h-1v-1h-1v-2h1v-1h1z" fill="#0000ff"/><path d="M583 179h2v1h1v1h1v2h-1v1h-1v1h-2v-1h-1v-1h-1v-2h1v-1h1z" fill="#0000ff"/><path d="M591 196h2v1h1v1h1v2h-1v1h-1v1h-2v-1h-1v-1h-1v-2h1v-1h1z" fill="#0000ff"/><path d="M599 188h2v1h1v1h1v2h-1v1h-1v1h-2v-1h-1v-1h-1v-2h1v-1h1z" fill="#0000ff"/><path d="M607 198h2v1h1v1h1v2h-1v1h-1v1h-2v-1h-1v-1h-1v-2h1v-1h1z" fill="#0000ff"/><path d="M615 149h2v1h1v1h1v2h-1v1h-1v1h-2v-1h-1v-1h-1v-2h1v-1h1z" fill="#0000ff"/><path d="M623 205h2v1h1v1h1v2h-1v1h-1v1h-2v-1h-1v-1h-1v-2h1v-1h1z" fill="#0000ff"/><path d="M631 179h2v1h1v1h1v2h-1v1h-1v1h-2v-1h-1v-1h-1v-2h1v-1h1z" fill="#0000ff"/><path d="M639 234h2v1h1v1h1v2h-1v1h-1v1h-2v-1h-1v-1h-1v-2h1v-1h1z" fill="#0000ff"/><path d="M647 191h2v1h1v1h1v2h-1v1h-1v1h-2v-1h-1v-1h-1v-2h1v-1h1z" fill="#0000ff"/><path d="M655 179h2v1h1v1h1v2h-1v1h-1v1h-2v-1h-1v-1h-1v-2h1v-1h1z" fill="#0000ff"/><path d="M663 202h2v1h1v1h1v2h-1v1h-1v1h-2v-1h-1v-1h-1v-2h1v-1h1z" fill="#0000ff"/><path d="M671 205h2v1h1v1h1v2h-1v1h-1v1h-2v-1h-1v-1h-1v-2h1v-1h1z" fill="#0000ff"/><path d="M679 220h2v1h1v1h1v2h-1v1h-1v1h-2v-1h-1v-1h-1v-2h1v-1h1z" fill="#0000ff"/><path d="M687 200h2v1h1v1h1v2h-1v1h-1v1h-2v-1h-1v-1h-1v-2h1v-1h1z" fill="#0000ff"/><path d="M695 182h2v1h1v1h1v2h-1v1h-1v1h-2v-1h-1v-1h-1v-2h1v-1h1z" fill="#0000ff"/><path d="M703 190h2v1h1v1h1v2h-1v1h-1v1h-2v-1h-1v-1h-1v-2h1v-1h1z" fill="#0000ff"/><path d="M711 199h2v1h1v1h1v2h-1v1h-1v1h-2v-1h-1v-1h-1v-2h1v-1h1z" fill="#0000ff"/><path d="M719 234h2v1h1v1h1v2h-1v1h-1v1h-2v-1h-1v-1h-1v-2h1v-1h1z" fill="#0000ff"/><path d="M727 220h2v1h1v1h1v2h-1v1h-1v1h-2v-1h-1v-1h-1v-2h1v-1h1z" fill="#0000ff"/></g></svg>
<div class="abs" style="left:0;top:0;width:752px;height:25px;background:#00b7c3"></div>
<svg class="abs" style="left:0;top:0" width="752" height="25" viewBox="0 0 752 25">
<g shape-rendering="crispEdges">
<rect x="1" y="4" width="16" height="15" fill="#000080"/>
<rect x="4" y="19" width="6" height="1" fill="#000060"/><rect x="15" y="17" width="2" height="3" fill="#0000ff"/>
<rect x="1" y="7" width="3" height="3" fill="#0000e8"/><rect x="14" y="7" width="3" height="5" fill="#0000e8"/><rect x="2" y="13" width="3" height="3" fill="#0000e8"/><rect x="15" y="13" width="2" height="4" fill="#0000ff"/><rect x="8" y="6" width="2" height="2" fill="#0000e8"/><rect x="12" y="15" width="2" height="1" fill="#0000e8"/>
<rect x="1" y="12" width="16" height="1" fill="#ffff00"/>
<rect x="5" y="5" width="2" height="13" fill="#ffff00"/>
<rect x="3" y="11" width="7" height="3" fill="#ffff00"/>
<rect x="4" y="10" width="4" height="5" fill="#ffff00"/>
<g fill="#e8d8d8"><rect x="2" y="6" width="1" height="1"/><rect x="4" y="7" width="1" height="1"/><rect x="9" y="5" width="1" height="1"/><rect x="11" y="5" width="1" height="1"/><rect x="13" y="5" width="1" height="1"/><rect x="15" y="6" width="1" height="1"/>
<rect x="1" y="15" width="1" height="1"/><rect x="2" y="16" width="1" height="1"/><rect x="3" y="17" width="1" height="1"/><rect x="7" y="18" width="1" height="1"/><rect x="9" y="17" width="1" height="1"/><rect x="11" y="17" width="1" height="1"/><rect x="13" y="16" width="1" height="1"/><rect x="15" y="17" width="1" height="1"/></g>
<rect x="633" y="12" width="10" height="1" fill="#000"/>
<rect x="678.5" y="7.5" width="9" height="9" fill="none" stroke="#000" stroke-width="1"/>
</g>
<path d="M724.5 7.5L733.5 16.5M733.5 7.5L724.5 16.5" stroke="#000" stroke-width="1.1" fill="none"/>
<path d="M747.5 0L752 0L752 3.5Z" fill="#202020"/>
</svg>
<div class="abs" style="left:0;top:457px;width:752px;height:1px;background:#fcfcfc"></div>
<div class="tb" style="left:6px;top:494px;width:48px;height:19px"></div>
<div class="tb" style="left:62px;top:494px;width:56px;height:19px"></div>
<div class="sbtrack" style="left:125px;top:464px;width:160px;height:18px;border-top:1px solid #a8a8a8;box-sizing:border-box"></div>
<div class="btn" style="left:125px;top:465px;width:17px;height:17px;"></div>
<div class="btn" style="left:211px;top:465px;width:17px;height:17px;"></div>
<div class="btn" style="left:268px;top:465px;width:17px;height:17px;"></div>
<svg class="abs" style="left:0;top:0" width="752" height="710"><g fill="#000" shape-rendering="crispEdges"><rect x="131" y="473" width="1" height="1"/><rect x="132" y="472" width="1" height="3"/><rect x="133" y="471" width="1" height="5"/><rect x="134" y="470" width="1" height="7"/></g><g fill="#000" shape-rendering="crispEdges"><rect x="277" y="473" width="1" height="1"/><rect x="276" y="472" width="1" height="3"/><rect x="275" y="471" width="1" height="5"/><rect x="274" y="470" width="1" height="7"/></g></svg>
<div class="btn" style="left:126px;top:489px;width:41px;height:25px;"></div>
<div class="btn" style="left:170px;top:489px;width:33px;height:25px;"></div>
<div class="btn" style="left:206px;top:489px;width:35px;height:25px;"></div>
<div class="btn" style="left:244px;top:489px;width:41px;height:25px;"></div>
<div class="tb" style="left:330px;top:462px;width:22px;height:19px"></div>
<div class="tb" style="left:330px;top:494px;width:22px;height:19px"></div>
<div class="btn" style="left:354px;top:461px;width:17px;height:12px;"></div>
<div class="btn" style="left:354px;top:473px;width:17px;height:12px;"></div>
<svg class="abs" style="left:0;top:0" width="752" height="710"><g fill="#000" shape-rendering="crispEdges"><rect x="361" y="465" width="1" height="1"/><rect x="360" y="466" width="3" height="1"/><rect x="359" y="467" width="5" height="1"/></g><g fill="#000" shape-rendering="crispEdges"><rect x="361" y="479" width="1" height="1"/><rect x="360" y="478" width="3" height="1"/><rect x="359" y="477" width="5" height="1"/></g></svg>
<div class="btn" style="left:354px;top:493px;width:17px;height:12px;"></div>
<div class="btn" style="left:354px;top:505px;width:17px;height:12px;"></div>
<svg class="abs" style="left:0;top:0" width="752" height="710"><g fill="#000" shape-rendering="crispEdges"><rect x="361" y="497" width="1" height="1"/><rect x="360" y="498" width="3" height="1"/><rect x="359" y="499" width="5" height="1"/></g><g fill="#000" shape-rendering="crispEdges"><rect x="361" y="511" width="1" height="1"/><rect x="360" y="510" width="3" height="1"/><rect x="359" y="509" width="5" height="1"/></g></svg>
<div class="cb" style="left:6px;top:523px"><svg class="abs" style="left:0;top:0" width="13" height="13" viewBox="0 0 13 13" shape-rendering="crispEdges" fill="#000"><rect x="3" y="5" width="1" height="3"/><rect x="4" y="6" width="1" height="3"/><rect x="5" y="7" width="1" height="3"/><rect x="6" y="6" width="1" height="3"/><rect x="7" y="5" width="1" height="3"/><rect x="8" y="4" width="1" height="3"/><rect x="9" y="3" width="1" height="3"/></svg></div>
<div class="cb" style="left:6px;top:539px"></div>
<div class="abs" style="left:180px;top:521px;width:73px;height:25px;background:#000"></div>
<div class="btn" style="left:181px;top:522px;width:71px;height:23px;"></div>
<div class="abs" style="left:184px;top:525px;width:63px;height:15px;border:1px dotted #000"></div>
<div class="btn" style="left:258px;top:522px;width:119px;height:24px;"></div>
<div class="grp" style="left:376px;top:463px;width:50px;height:82px"></div><div class="gap" style="left:382px;top:462px;width:37px;height:4px"></div>
<div class="sbtrack" style="left:381px;top:481px;width:17px;height:58px"></div>
<div class="btn" style="left:381px;top:482px;width:17px;height:17px;"></div>
<div class="btn" style="left:381px;top:501px;width:17px;height:17px;"></div>
<div class="btn" style="left:381px;top:522px;width:17px;height:17px;"></div>
<svg class="abs" style="left:0;top:0" width="752" height="710"><g fill="#000" shape-rendering="crispEdges"><rect x="389" y="488" width="1" height="1"/><rect x="388" y="489" width="3" height="1"/><rect x="387" y="490" width="5" height="1"/><rect x="386" y="491" width="7" height="1"/></g><g fill="#000" shape-rendering="crispEdges"><rect x="389" y="531" width="1" height="1"/><rect x="388" y="530" width="3" height="1"/><rect x="387" y="529" width="5" height="1"/><rect x="386" y="528" width="7" height="1"/></g></svg>
<div class="sbtrack" style="left:404px;top:481px;width:17px;height:58px"></div>
<div class="btn" style="left:404px;top:482px;width:17px;height:17px;"></div>
<div class="btn" style="left:404px;top:501px;width:17px;height:17px;"></div>
<div class="btn" style="left:404px;top:522px;width:17px;height:17px;"></div>
<svg class="abs" style="left:0;top:0" width="752" height="710"><g fill="#000" shape-rendering="crispEdges"><rect x="412" y="488" width="1" height="1"/><rect x="411" y="489" width="3" height="1"/><rect x="410" y="490" width="5" height="1"/><rect x="409" y="491" width="7" height="1"/></g><g fill="#000" shape-rendering="crispEdges"><rect x="412" y="531" width="1" height="1"/><rect x="411" y="530" width="3" height="1"/><rect x="410" y="529" width="5" height="1"/><rect x="409" y="528" width="7" height="1"/></g></svg>
<div class="grp" style="left:428px;top:463px;width:61px;height:54px"></div><div class="gap" style="left:435px;top:462px;width:23px;height:4px"></div>
<div class="abs" style="left:436px;top:472px;width:13px;height:11px;overflow:hidden"><div class="cb" style="left:0;top:-1px"><svg class="abs" style="left:0;top:0" width="13" height="13" viewBox="0 0 13 13" shape-rendering="crispEdges" fill="#000"><rect x="3" y="5" width="1" height="3"/><rect x="4" y="6" width="1" height="3"/><rect x="5" y="7" width="1" height="3"/><rect x="6" y="6" width="1" height="3"/><rect x="7" y="5" width="1" height="3"/><rect x="8" y="4" width="1" height="3"/><rect x="9" y="3" width="1" height="3"/></svg></div></div>
<div class="abs" style="left:436px;top:486px;width:13px;height:11px;overflow:hidden"><div class="cb" style="left:0;top:-1px"><svg class="abs" style="left:0;top:0" width="13" height="13" viewBox="0 0 13 13" shape-rendering="crispEdges" fill="#000"><rect x="3" y="5" width="1" height="3"/><rect x="4" y="6" width="1" height="3"/><rect x="5" y="7" width="1" height="3"/><rect x="6" y="6" width="1" height="3"/><rect x="7" y="5" width="1" height="3"/><rect x="8" y="4" width="1" height="3"/><rect x="9" y="3" width="1" height="3"/></svg></div></div>
<div class="btn" style="left:436px;top:498px;width:46px;height:15px;"></div>
<div class="grp" style="left:492px;top:463px;width:56px;height:54px"></div><div class="gap" style="left:499px;top:462px;width:31px;height:4px"></div>
<div class="rb" style="left:501px;top:476px"></div><div class="abs" style="left:505px;top:480px;width:4px;height:4px;border-radius:2px;background:#000"></div>
<div class="rb" style="left:501px;top:497px"></div>
<div class="btn" style="left:428px;top:521px;width:65px;height:27px;"></div>
<div class="btn" style="left:554px;top:461px;width:143px;height:17px;"></div>
<div class="btn" style="left:554px;top:481px;width:103px;height:18px;"></div>
<div class="btn" style="left:660px;top:481px;width:37px;height:18px;"></div>
<div class="btn" style="left:710px;top:461px;width:36px;height:25px;"></div>
<div class="cb" style="left:552px;top:503px"><svg class="abs" style="left:0;top:0" width="13" height="13" viewBox="0 0 13 13" shape-rendering="crispEdges" fill="#000"><rect x="3" y="5" width="1" height="3"/><rect x="4" y="6" width="1" height="3"/><rect x="5" y="7" width="1" height="3"/><rect x="6" y="6" width="1" height="3"/><rect x="7" y="5" width="1" height="3"/><rect x="8" y="4" width="1" height="3"/><rect x="9" y="3" width="1" height="3"/></svg></div>
<div class="grp" style="left:652px;top:513px;width:95px;height:35px"></div><div class="gap" style="left:658px;top:512px;width:36px;height:4px"></div>
<div class="gap" style="left:701px;top:512px;width:34px;height:4px"></div>
<div class="abs" style="left:702px;top:499px;width:13px;height:12px;overflow:hidden"><div class="cb" style="left:0;top:0px"><svg class="abs" style="left:0;top:0" width="13" height="13" viewBox="0 0 13 13" shape-rendering="crispEdges" fill="#000"><rect x="3" y="5" width="1" height="3"/><rect x="4" y="6" width="1" height="3"/><rect x="5" y="7" width="1" height="3"/><rect x="6" y="6" width="1" height="3"/><rect x="7" y="5" width="1" height="3"/><rect x="8" y="4" width="1" height="3"/><rect x="9" y="3" width="1" height="3"/></svg></div></div>
<div class="pbtn" style="left:658px;top:523px;width:19px;height:17px"></div>
<div class="pbtn" style="left:680px;top:523px;width:19px;height:17px"></div>
<div class="pbtn" style="left:702px;top:523px;width:19px;height:17px"></div>
<div class="btn" style="left:724px;top:523px;width:17px;height:17px;"></div>
<div class="btn" style="left:238px;top:553px;width:121px;height:28px;"></div>
<div class="btn" style="left:368px;top:553px;width:169px;height:28px;"></div>
<div class="btn" style="left:542px;top:553px;width:106px;height:28px;"></div>
<div class="abs" style="left:0;top:586px;width:752px;height:1px;background:#a0a0a0"></div><div class="abs" style="left:0;top:587px;width:752px;height:1px;background:#fff"></div>
<div class="grp" style="left:6px;top:614px;width:736px;height:91px"></div><div class="gap" style="left:11px;top:613px;width:70px;height:4px"></div>
<svg class="abs" style="left:748px;top:704px" width="4" height="6" viewBox="0 0 4 6"><path d="M4 0.5L4 6L1.5 6Z" fill="#30b8c4"/></svg>
<div class="tb" style="left:118px;top:623px;width:57px;height:26px"></div>
<div class="tb" style="left:230px;top:622px;width:48px;height:25px"></div>
<div class="tb" style="left:374px;top:622px;width:48px;height:25px"></div>
<div class="tb" style="left:646px;top:622px;width:48px;height:25px"></div>
<div class="tb" style="left:70px;top:662px;width:48px;height:25px"></div>
<div class="tb" style="left:214px;top:662px;width:56px;height:25px"></div>
<div class="tb" style="left:390px;top:662px;width:64px;height:25px"></div>
<div class="tb" style="left:646px;top:662px;width:48px;height:25px"></div>
<span class="t" id="t0" style="left:23.10px;top:73.84px;font-size:12px;transform:scaleX(0.8833);">1100</span>
<span class="t" id="t1" style="left:23.10px;top:101.84px;font-size:12px;transform:scaleX(0.8538);">1000</span>
<span class="t" id="t2" style="left:30.20px;top:130.84px;font-size:12px;transform:scaleX(0.8886);">900</span>
<span class="t" id="t3" style="left:30.20px;top:159.84px;font-size:12px;transform:scaleX(0.8886);">800</span>
<span class="t" id="t4" style="left:30.20px;top:188.84px;font-size:12px;transform:scaleX(0.8886);">700</span>
<span class="t" id="t5" style="left:30.20px;top:216.84px;font-size:12px;transform:scaleX(0.8886);">600</span>
<span class="t" id="t6" style="left:30.20px;top:245.84px;font-size:12px;transform:scaleX(0.8886);">500</span>
<span class="t" id="t7" style="left:30.20px;top:274.84px;font-size:12px;transform:scaleX(0.8886);">400</span>
<span class="t" id="t8" style="left:30.20px;top:303.84px;font-size:12px;transform:scaleX(0.8886);">300</span>
<span class="t" id="t9" style="left:30.20px;top:331.84px;font-size:12px;transform:scaleX(0.8886);">200</span>
<span class="t" id="t10" style="left:30.20px;top:360.84px;font-size:12px;transform:scaleX(0.8886);">100</span>
<span class="t" id="t11" style="left:48.10px;top:389.84px;font-size:12px;transform:scaleX(0.8224);">0</span>
<span class="t" id="t12" style="left:129.10px;top:416.84px;font-size:12px;transform:scaleX(0.8337);">180</span>
<span class="t" id="t13" style="left:369.10px;top:416.84px;font-size:12px;transform:scaleX(0.8337);">210</span>
<span class="t" id="t14" style="left:609.10px;top:416.84px;font-size:12px;transform:scaleX(0.8337);">240</span>
<span class="t" id="t15" style="left:14.40px;top:30.84px;font-size:12px;font-weight:bold;letter-spacing:0.366px;">2025</span>
<span class="t" id="t16" style="left:47.80px;top:30.84px;font-size:12px;font-weight:bold;letter-spacing:0.356px;">Jan</span>
<span class="t" id="t17" style="left:75.10px;top:30.84px;font-size:12px;font-weight:bold;transform:scaleX(0.9110);">30;</span>
<span class="t" id="t18" style="left:95.30px;top:30.84px;font-size:12px;font-weight:bold;letter-spacing:0.983px;">(4685)</span>
<span class="t" id="t19" style="left:139.50px;top:30.84px;font-size:12px;font-weight:bold;letter-spacing:0.185px;">Karetnikov</span>
<span class="t" id="t20" style="left:208.40px;top:30.84px;font-size:12px;font-weight:bold;letter-spacing:0.131px;">occults</span>
<span class="t" id="t21" style="left:257.10px;top:30.84px;font-size:12px;font-weight:bold;letter-spacing:0.189px;">UCAC4</span>
<span class="t" id="t22" style="left:305.10px;top:30.84px;font-size:12px;font-weight:bold;letter-spacing:0.638px;">568-041879</span>
<span class="t" id="t23" style="left:380.80px;top:30.84px;font-size:12px;font-weight:bold;transform:scaleX(0.9574);">Observed</span>
<span class="t" id="t24" style="left:439.60px;top:30.84px;font-size:12px;font-weight:bold;transform:scaleX(0.9347);">by</span>
<span class="t" id="t25" style="left:459.80px;top:30.84px;font-size:12px;font-weight:bold;transform:scaleX(0.9963);">Katsuhiko</span>
<span class="t" id="t26" style="left:524.00px;top:30.84px;font-size:12px;font-weight:bold;letter-spacing:0.434px;">Kitazaki</span>
<span class="t" id="t27" style="left:576.99px;top:30.84px;font-size:12px;transform:scaleX(1.2000);">/</span>
<span class="t" id="t28" style="left:586.40px;top:30.84px;font-size:12px;transform:scaleX(0.9465);">PSF-Frame</span>
<span class="t" id="t29" style="left:649.60px;top:30.84px;font-size:12px;transform:scaleX(0.9159);">Photometry</span>
<span class="t" id="t30" style="left:711.74px;top:30.84px;font-size:12px;transform:scaleX(1.2000);">/</span>
<span class="t" id="t31" style="left:14.10px;top:433.24px;font-size:12px;transform:scaleX(0.9229);">Exp=338msec</span>
<span class="t" id="t32" style="left:89.39px;top:433.24px;font-size:12px;transform:scaleX(1.2000);">/</span>
<span class="t" id="t33" style="left:98.20px;top:433.24px;font-size:12px;transform:scaleX(0.9330);">Frm</span>
<span class="t" id="t34" style="left:122.50px;top:433.24px;font-size:12px;transform:scaleX(0.8596);">No.211.0</span>
<span class="t" id="t35" style="left:169.69px;top:433.24px;font-size:12px;transform:scaleX(1.2000);">/</span>
<span class="t" id="t36" style="left:178.40px;top:433.24px;font-size:12px;transform:scaleX(0.9330);">Frm</span>
<span class="t" id="t37" style="left:202.10px;top:433.24px;font-size:12px;transform:scaleX(0.9186);">Mid=</span>
<span class="t" id="t38" style="left:230.70px;top:433.24px;font-size:12px;transform:scaleX(0.8722);">16h28m41.5428s,</span>
<span class="t" id="t39" style="left:323.40px;top:433.24px;font-size:12px;transform:scaleX(0.8392);">End=</span>
<span class="t" id="t40" style="left:352.40px;top:433.24px;font-size:12px;transform:scaleX(0.8825);">41.7118s</span>
<span class="t" id="t41" style="left:23.00px;top:7.14px;font-size:12px;transform:scaleX(0.9802);">Graph</span>
<span class="t" id="t42" style="left:5.40px;top:461.84px;font-size:12px;letter-spacing:0.026px;">Current-</span>
<span class="t" id="t43" style="left:14.40px;top:478.14px;font-size:12px;transform:scaleX(0.8999);">Frame</span>
<span class="t" id="t44" style="left:65.90px;top:461.84px;font-size:12px;transform:scaleX(0.9168);">Luminous</span>
<span class="t" id="t45" style="left:64.90px;top:478.14px;font-size:12px;transform:scaleX(0.9999);">Intensity</span>
<span class="t" id="t46" style="left:9.40px;top:496.84px;font-size:12px;transform:scaleX(0.8648);">211.0</span>
<span class="t" id="t47" style="left:65.40px;top:496.84px;font-size:12px;transform:scaleX(0.8862);">88.9</span>
<span class="t" id="t48" style="left:129.10px;top:495.04px;font-size:12px;transform:scaleX(0.9203);">-10Sec</span>
<span class="t" id="t49" style="left:172.40px;top:495.04px;font-size:12px;transform:scaleX(0.8993);">-1Sec</span>
<span class="t" id="t50" style="left:208.40px;top:495.04px;font-size:12px;transform:scaleX(0.8935);">+1Sec</span>
<span class="t" id="t51" style="left:245.90px;top:495.04px;font-size:12px;transform:scaleX(0.9185);">+10Sec</span>
<span class="t" id="t52" style="left:290.90px;top:470.04px;font-size:12px;transform:scaleX(0.9557);">Scale</span>
<span class="t" id="t53" style="left:333.20px;top:465.24px;font-size:12px;transform:scaleX(0.8075);">4</span>
<span class="t" id="t54" style="left:293.90px;top:493.84px;font-size:12px;transform:scaleX(0.9288);">Radius</span>
<span class="t" id="t55" style="left:333.20px;top:496.84px;font-size:12px;transform:scaleX(0.8075);">3</span>
<span class="t" id="t56" style="left:23.30px;top:522.44px;font-size:12px;transform:scaleX(0.9619);">Show Image of Clicked point</span>
<span class="t" id="t57" style="left:23.90px;top:538.84px;font-size:12px;transform:scaleX(0.9593);">Reproduce Aperture Position</span>
<span class="t" id="t58" style="left:186.40px;top:526.84px;font-size:12px;transform:scaleX(0.9321);">Save Image</span>
<span class="t" id="t59" style="left:270.40px;top:526.84px;font-size:12px;transform:scaleX(0.9672);">Copy to ClipBoard</span>
<span class="t" id="t60" style="left:383.90px;top:457.84px;font-size:12px;letter-spacing:0.172px;">Y Axis</span>
<span class="t" id="t61" style="left:381.80px;top:470.04px;font-size:12px;transform:scaleX(0.9130);">Min Max</span>
<span class="t" id="t62" style="left:435.80px;top:457.44px;font-size:12px;transform:scaleX(0.9168);">Line</span>
<span class="t" id="t63" style="left:454.40px;top:470.54px;font-size:12px;transform:scaleX(0.9924);">Axis</span>
<span class="t" id="t64" style="left:454.40px;top:485.44px;font-size:12px;transform:scaleX(0.9148);">Data</span>
<span class="t" id="t65" style="left:442.20px;top:498.44px;font-size:12px;transform:scaleX(0.9832);">Hilight</span>
<span class="t" id="t66" style="left:499.90px;top:457.84px;font-size:12px;transform:scaleX(0.9352);">Width</span>
<span class="t" id="t67" style="left:517.90px;top:476.34px;font-size:12px;transform:scaleX(0.8948);">Part</span>
<span class="t" id="t68" style="left:517.90px;top:497.34px;font-size:12px;transform:scaleX(0.8833);">Entire</span>
<span class="t" id="t69" style="left:431.90px;top:527.84px;font-size:12px;transform:scaleX(0.9574);">[3D] Image</span>
<span class="t" id="t70" style="left:560.40px;top:462.84px;font-size:12px;transform:scaleX(0.9744);">Correction for absorption</span>
<span class="t" id="t71" style="left:563.90px;top:483.04px;font-size:12px;transform:scaleX(0.9505);">Noise Reduction</span>
<span class="t" id="t72" style="left:663.20px;top:482.54px;font-size:12px;transform:scaleX(0.9407);">Reset</span>
<span class="t" id="t73" style="left:712.90px;top:466.84px;font-size:12px;letter-spacing:0.171px;">close</span>
<span class="t" id="t74" style="left:569.90px;top:501.84px;font-size:12px;transform:scaleX(0.8862);">Information</span>
<span class="t" id="t75" style="left:659.00px;top:506.84px;font-size:12px;transform:scaleX(0.9831);">Object</span>
<span class="t" id="t76" style="left:719.40px;top:498.54px;font-size:12px;transform:scaleX(0.9583);">ID</span>
<span class="t" id="t77" style="left:664.40px;top:524.34px;font-size:12px;transform:scaleX(0.9481);">A</span>
<span class="t" id="t78" style="left:686.30px;top:524.34px;font-size:12px;transform:scaleX(0.9357);">B</span>
<span class="t" id="t79" style="left:707.40px;top:524.34px;font-size:12px;transform:scaleX(0.9456);">C</span>
<span class="t" id="t80" style="left:729.30px;top:524.34px;font-size:12px;transform:scaleX(0.8673);">L</span>
<span class="t" id="t81" style="left:246.10px;top:560.54px;font-size:12px;font-weight:bold;transform:scaleX(0.9475);">Lunar Identification</span>
<span class="t" id="t82" style="left:384.90px;top:558.58px;font-size:14.67px;font-weight:bold;transform:scaleX(0.9678);">Diffraction Analysis</span>
<span class="t" id="t83" style="left:553.90px;top:559.22px;font-size:13.33px;font-weight:bold;letter-spacing:0.070px;">Make Report</span>
<span class="t" id="t84" style="left:12.90px;top:608.84px;font-size:12px;letter-spacing:0.123px;">S/N vs Error</span>
<span class="t" id="t85" style="left:14.40px;top:626.22px;font-size:13.33px;font-weight:bold;transform:scaleX(0.9933);">S/N (Full drop)</span>
<span class="t" id="t86" style="left:125.40px;top:627.66px;font-size:16px;font-weight:bold;color:#0000ff;transform:scaleX(0.9978);">3.9</span>
<span class="t" id="t87" style="left:198.90px;top:626.22px;font-size:13.33px;font-weight:bold;transform:scaleX(0.9541);">S/N</span>
<span class="t" id="t88" style="left:232.90px;top:626.58px;font-size:14.67px;font-weight:bold;color:#ff0000;transform:scaleX(0.9914);">3.5</span>
<span class="t" id="t89" style="left:285.90px;top:625.72px;font-size:13.33px;font-weight:bold;letter-spacing:0.092px;">expected on</span>
<span class="t" id="t90" style="left:376.90px;top:626.58px;font-size:14.67px;font-weight:bold;letter-spacing:0.162px;">2.6</span>
<span class="t" id="t91" style="left:429.90px;top:625.72px;font-size:13.33px;font-weight:bold;letter-spacing:0.031px;">Mag drop</span>
<span class="t" id="t92" style="left:525.90px;top:625.72px;font-size:13.33px;font-weight:bold;letter-spacing:0.095px;">Frame exposure</span>
<span class="t" id="t93" style="left:648.90px;top:626.58px;font-size:14.67px;font-weight:bold;letter-spacing:0.116px;">338</span>
<span class="t" id="t94" style="left:701.90px;top:625.72px;font-size:13.33px;font-weight:bold;transform:scaleX(0.9885);">msec</span>
<span class="t" id="t95" style="left:13.90px;top:658.22px;font-size:13.33px;font-weight:bold;transform:scaleX(0.9953);">Fresnel</span>
<span class="t" id="t96" style="left:13.90px;top:673.72px;font-size:13.33px;font-weight:bold;transform:scaleX(0.9968);">Number</span>
<span class="t" id="t97" style="left:72.90px;top:666.08px;font-size:14.67px;font-weight:bold;transform:scaleX(0.9890);">538</span>
<span class="t" id="t98" style="left:133.90px;top:658.22px;font-size:13.33px;font-weight:bold;letter-spacing:0.190px;">Lower Limit</span>
<span class="t" id="t99" style="left:141.40px;top:673.72px;font-size:13.33px;font-weight:bold;letter-spacing:0.052px;">for detect</span>
<span class="t" id="t100" style="left:216.90px;top:666.08px;font-size:14.67px;font-weight:bold;color:#0000ff;transform:scaleX(0.9890);">916</span>
<span class="t" id="t101" style="left:270.40px;top:665.72px;font-size:13.33px;font-weight:bold;transform:scaleX(0.9591);">msec</span>
<span class="t" id="t102" style="left:317.90px;top:658.72px;font-size:13.33px;font-weight:bold;letter-spacing:0.056px;">Predicted</span>
<span class="t" id="t103" style="left:318.40px;top:673.84px;font-size:12px;font-weight:bold;transform:scaleX(0.9873);">Time Error</span>
<span class="t" id="t104" style="left:392.90px;top:666.08px;font-size:14.67px;font-weight:bold;color:#ff0000;transform:scaleX(0.9686);">349</span>
<span class="t" id="t105" style="left:454.40px;top:673.22px;font-size:13.33px;font-weight:bold;transform:scaleX(0.9591);">msec</span>
<span class="t" id="t106" style="left:501.90px;top:658.22px;font-size:13.33px;font-weight:bold;transform:scaleX(0.9844);">Expected Error for</span>
<span class="t" id="t107" style="left:501.90px;top:673.72px;font-size:13.33px;font-weight:bold;letter-spacing:0.059px;">Analyzing event time</span>
<span class="t" id="t108" style="left:648.90px;top:666.08px;font-size:14.67px;font-weight:bold;letter-spacing:0.116px;">124</span>
<span class="t" id="t109" style="left:698.90px;top:673.22px;font-size:13.33px;font-weight:bold;transform:scaleX(0.9885);">msec</span>
</body></html>
